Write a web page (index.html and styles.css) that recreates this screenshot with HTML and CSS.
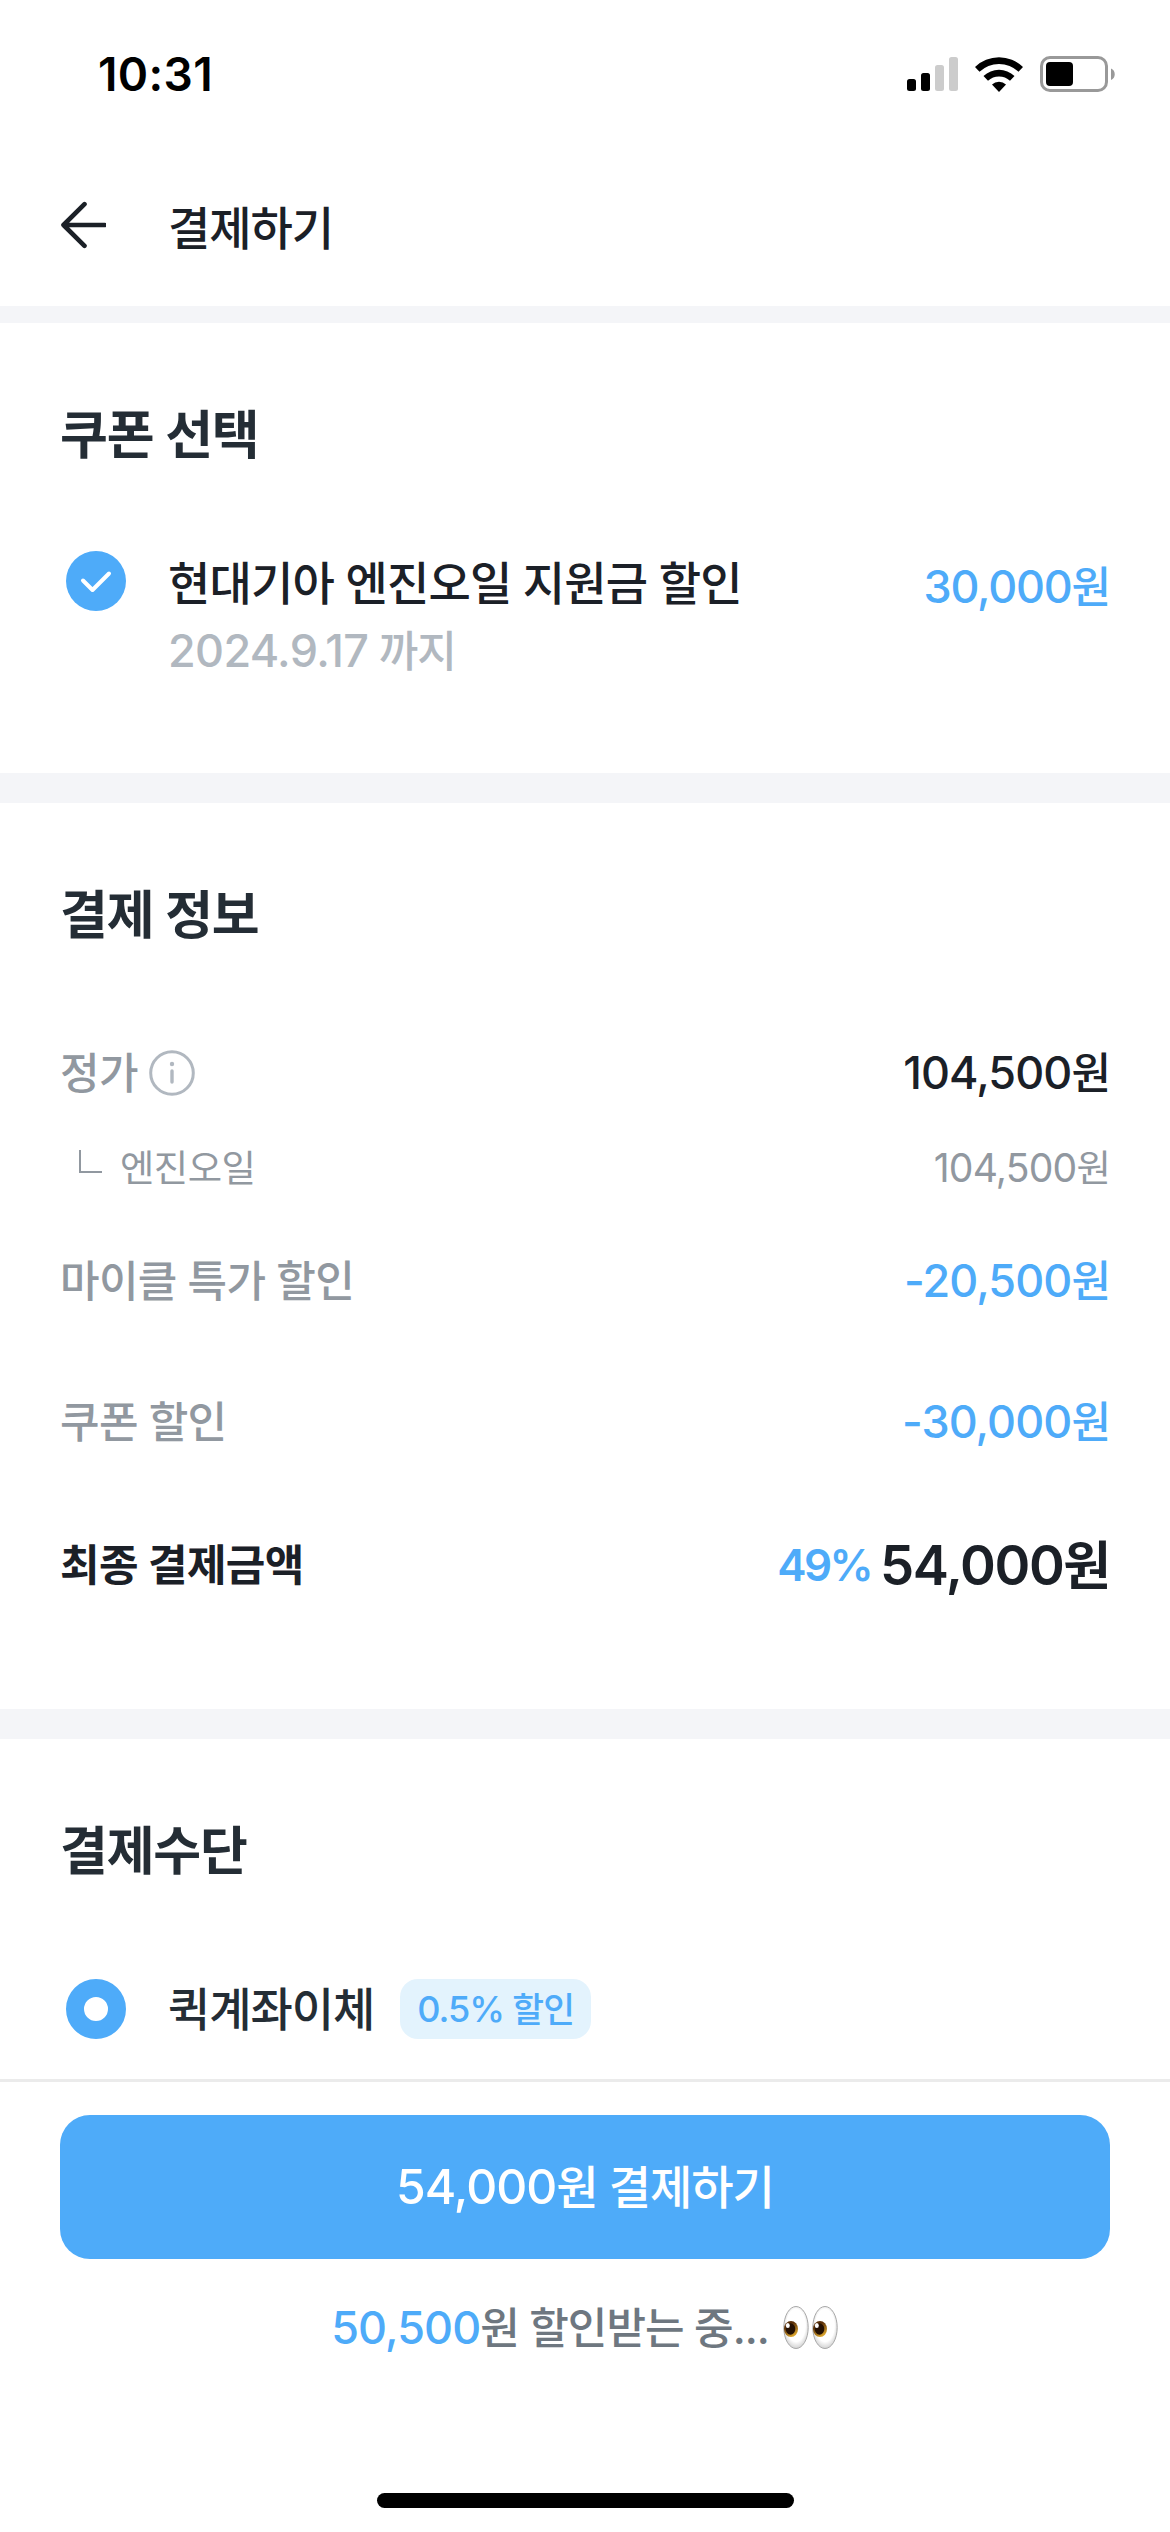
FILE: index.html
```html
<!DOCTYPE html>
<html lang="ko">
<head>
    <meta charset="UTF-8">
    <meta name="viewport" content="width=device-width, initial-scale=1.0">
    <title>결제하기</title>
    <link rel="stylesheet" href="styles.css">
</head>
<body>
    <!-- 상태바 -->
    <div class="status-bar">
        <span class="time">10:31</span>
        <div class="status-icons">
            <svg class="signal" width="51" height="36" viewBox="0 0 51 36">
                <rect x="0" y="23" width="9" height="12" rx="2.5"/>
                <rect x="14" y="17" width="9" height="18" rx="2.5"/>
                <rect x="28" y="9" width="9" height="26" rx="2.5" fill="#ccc"/>
                <rect x="42" y="1" width="9" height="34" rx="2.5" fill="#ccc"/>
            </svg>
            <svg class="wifi" width="48" height="36" viewBox="0 0 48 36">
                <path d="M0 11A34.5 34.5 0 0 1 48 11L43.5 15.8A28 28 0 0 0 4.5 15.8Z"/>
                <path d="M8.5 20A22.5 22.5 0 0 1 39.5 20L35 24.8A16 16 0 0 0 13 24.8Z"/>
                <path d="M17 28.6A10 10 0 0 1 31 28.6L24 36Z"/>
            </svg>
            <svg class="battery" width="76" height="36" viewBox="0 0 76 36">
                <rect x="1.5" y="1.5" width="65" height="33" rx="8.5" fill="none" stroke="#999" stroke-width="3"/>
                <rect x="6" y="6" width="27" height="24" rx="4"/>
                <path d="M71 12.5C76 14.5 76 22 71 24Z" fill="#999"/>
            </svg>
        </div>
    </div>

    <header class="header">
        <svg class="back" width="48" height="48" viewBox="0 0 48 48">
            <path d="M26.5 3.2L5.5 24L26.5 44.8M5.5 24H46.7"/>
        </svg>
        <h1>결제하기</h1>
    </header>

    <main>
        <!-- 쿠폰 선택 -->
        <section class="section coupon-section">
            <h2>쿠폰 선택</h2>
            <div class="coupon">
                <svg class="check" width="60" height="60" viewBox="0 0 60 60">
                    <circle cx="30" cy="30" r="30"/>
                    <path d="M17 29.5L26.5 39L43 22.5"/>
                </svg>
                <div class="coupon-text">
                    <p class="coupon-name">현대기아 엔진오일 지원금 할인</p>
                    <p class="coupon-date"><span class="num">2024.9.17</span> 까지</p>
                </div>
                <span class="coupon-price"><span class="num">30,000</span>원</span>
            </div>
        </section>

        <!-- 결제 정보 -->
        <section class="section info-section">
            <h2>결제 정보</h2>
            <div class="row row-price">
                <span class="label">정가
                    <svg class="info" width="46" height="46" viewBox="0 0 46 46">
                        <circle cx="23" cy="23" r="21.3" fill="none" stroke="#b1b8c0" stroke-width="3"/>
                        <circle cx="23" cy="14" r="2.2" fill="#b1b8c0"/>
                        <path d="M23 21V32" stroke="#b1b8c0" stroke-width="3.4" stroke-linecap="round"/>
                    </svg>
                </span>
                <span class="value"><span class="num">104,500</span>원</span>
            </div>
            <div class="row row-sub">
                <span class="label"><i class="branch"></i>엔진오일</span>
                <span class="value"><span class="num">104,500</span>원</span>
            </div>
            <div class="row row-special">
                <span class="label">마이클 특가 할인</span>
                <span class="value blue"><span class="num">-20,500</span>원</span>
            </div>
            <div class="row row-coupon">
                <span class="label">쿠폰 할인</span>
                <span class="value blue"><span class="num">-30,000</span>원</span>
            </div>
            <div class="row row-total">
                <span class="label">최종 결제금액</span>
                <span class="value">
                    <span class="rate">49%</span>
                    <span class="total"><span class="num">54,000</span>원</span>
                </span>
            </div>
        </section>

        <!-- 결제수단 -->
        <section class="section method-section">
            <h2>결제수단</h2>
            <div class="method">
                <span class="radio"></span>
                <span class="method-name">퀵계좌이체</span>
                <span class="badge"><span class="num">0.5%</span> 할인</span>
            </div>
        </section>
    </main>

    <footer class="footer">
        <button class="pay-button"><span class="num">54,000</span>원 결제하기</button>
        <p class="saving">
            <span><span class="num blue">50,500</span>원 할인받는 중<span class="dots">...</span></span>
            <svg class="eyes" width="56" height="50" viewBox="0 0 56 50">
                <defs>
                    <radialGradient id="white" cx="0.5" cy="0.45" r="0.55">
                        <stop offset="0.7" stop-color="#fff"/>
                        <stop offset="1" stop-color="#d2d2d2"/>
                    </radialGradient>
                    <linearGradient id="iris" x1="0" y1="0" x2="0.5" y2="1">
                        <stop offset="0.35" stop-color="#5a2f08"/>
                        <stop offset="1" stop-color="#d9a32c"/>
                    </linearGradient>
                </defs>
                <g id="eye">
                    <ellipse cx="13" cy="24.5" rx="12.2" ry="21" fill="url(#white)" stroke="#a9a9a9"/>
                    <ellipse cx="8" cy="26" rx="7" ry="8" fill="url(#iris)"/>
                    <ellipse cx="7.5" cy="26" rx="4.8" ry="5.8" fill="#251103"/>
                    <ellipse cx="4.8" cy="22.5" rx="2" ry="2.6" fill="#fff"/>
                </g>
                <use href="#eye" x="29"/>
            </svg>
        </p>
        <div class="home-indicator"></div>
    </footer>
</body>
</html>
```

FILE: styles.css
```css
* {
    box-sizing: border-box;
    margin: 0;
    padding: 0;
    letter-spacing: -0.023em;
}
body {
    display: flex;
    flex-direction: column;
    height: 2532px;
    background-color: #fff;
    color: #1b2027;
    font-family: Inter, "Noto Sans CJK KR", sans-serif;
    font-weight: 500;
    overflow: hidden;
}
svg {
    display: block;
    flex-shrink: 0;
}
.num {
    font-size: 1.045em;
    letter-spacing: -0.02em;
}
.blue {
    color: #4eabf9;
}

/* 상태바 */
.status-bar {
    display: flex;
    justify-content: space-between;
    align-items: center;
    height: 148px;
    padding: 0 54px 0 98px;
    color: #000;
}
.time {
    font-size: 46px;
    font-weight: 600;
    letter-spacing: 0.008em;
}
.status-icons {
    display: flex;
    gap: 17px;
}

/* 헤더 */
.header {
    display: flex;
    align-items: center;
    height: 175px;
    padding: 2px 60px 0 58px;
    border-bottom: 17px solid #f4f5f8;
}
.back {
    margin-bottom: 6px;
    fill: none;
    stroke: #1b2027;
    stroke-width: 4.6;
    stroke-linecap: round;
    stroke-linejoin: round;
}
.header h1 {
    margin-left: 62px;
    font-size: 46px;
    font-weight: 500;
    line-height: 60px;
}

/* 섹션 공통 */
.section {
    padding: 73px 60px 0;
}
.section h2 {
    color: #242d35;
    font-size: 52px;
    font-weight: 600;
    line-height: 80px;
}
.coupon-section {
    height: 480px;
    border-bottom: 30px solid #f4f5f8;
}
.info-section {
    height: 936px;
    border-bottom: 30px solid #f4f5f8;
}

/* 쿠폰 */
.coupon {
    display: flex;
    align-items: flex-start;
    margin-top: 74px;
    padding-left: 6px;
}
.check {
    margin-top: 1px;
}
.check circle {
    fill: #4eabf9;
}
.check path {
    fill: none;
    stroke: #fff;
    stroke-width: 4;
    stroke-linecap: round;
    stroke-linejoin: round;
}
.coupon-text {
    flex: 1;
    margin-left: 42px;
}
.coupon-name {
    font-size: 46px;
    line-height: 67px;
    letter-spacing: -0.018em;
}
.coupon-date {
    color: #b1b8c0;
    font-size: 43px;
    line-height: 68px;
}
.coupon-date .num {
    letter-spacing: -0.014em;
}
.coupon-price {
    color: #4eabf9;
    font-size: 43px;
    line-height: 74px;
}
.coupon-price .num {
    letter-spacing: -0.028em;
}

/* 결제 정보 */
.row {
    display: flex;
    justify-content: space-between;
    align-items: center;
    font-size: 43px;
    line-height: 60px;
}
.label {
    display: flex;
    align-items: center;
    color: #9198a0;
    letter-spacing: -0.015em;
}
.row-price {
    margin-top: 87px;
}
.info {
    margin-left: 11px;
}
.row-sub {
    margin-top: 35px;
    color: #9198a0;
    font-size: 37.4px;
    font-weight: 400;
}
.branch {
    width: 23px;
    height: 23px;
    margin: 0 18px 15px 19px;
    border-left: 2.5px solid #9198a0;
    border-bottom: 2.5px solid #9198a0;
}
.row-special {
    margin-top: 52px;
}
.row-coupon {
    margin-top: 81px;
}
.row-total {
    margin-top: 81px;
    font-weight: 600;
}
.row-total .label {
    color: #1b2027;
}
.row-total .value {
    display: flex;
    align-items: center;
    gap: 9px;
}
.rate {
    color: #4eabf9;
    font-size: 44px;
    letter-spacing: -0.06em;
}
.total {
    padding-top: 2px;
    font-size: 52px;
}
.total .num {
    letter-spacing: -0.026em;
}

/* 결제수단 */
.method {
    display: flex;
    align-items: center;
    margin-top: 87px;
    padding-left: 6px;
}
.radio {
    width: 60px;
    height: 60px;
    border: 18px solid #4eabf9;
    border-radius: 50%;
}
.method-name {
    margin-left: 42px;
    color: #242d35;
    font-size: 46px;
    line-height: 60px;
}
.badge {
    height: 60px;
    margin-left: 26px;
    padding: 0 17px;
    border-radius: 18px;
    background-color: #e3f3fd;
    color: #4eabf9;
    font-size: 34.5px;
    line-height: 60px;
}
.badge .num {
    letter-spacing: -0.03em;
}

/* 하단 결제 영역 */
.footer {
    display: flex;
    flex-direction: column;
    align-items: center;
    height: 453px;
    margin-top: auto;
    padding: 33px 60px 24px;
    border-top: 3px solid #ebebeb;
    background-color: #fff;
}
.pay-button {
    width: 100%;
    height: 144px;
    padding-bottom: 7px;
    border: none;
    border-radius: 30px;
    background-color: #4eabf9;
    color: #fff;
    font-family: inherit;
    font-size: 46px;
    font-weight: 500;
    cursor: pointer;
}
.saving {
    display: flex;
    align-items: center;
    gap: 14px;
    margin-top: 38px;
    color: #6e7780;
    font-size: 43px;
    line-height: 62px;
}
.home-indicator {
    width: 417px;
    height: 15px;
    margin-top: auto;
    border-radius: 8px;
    background-color: #000;
}
```
